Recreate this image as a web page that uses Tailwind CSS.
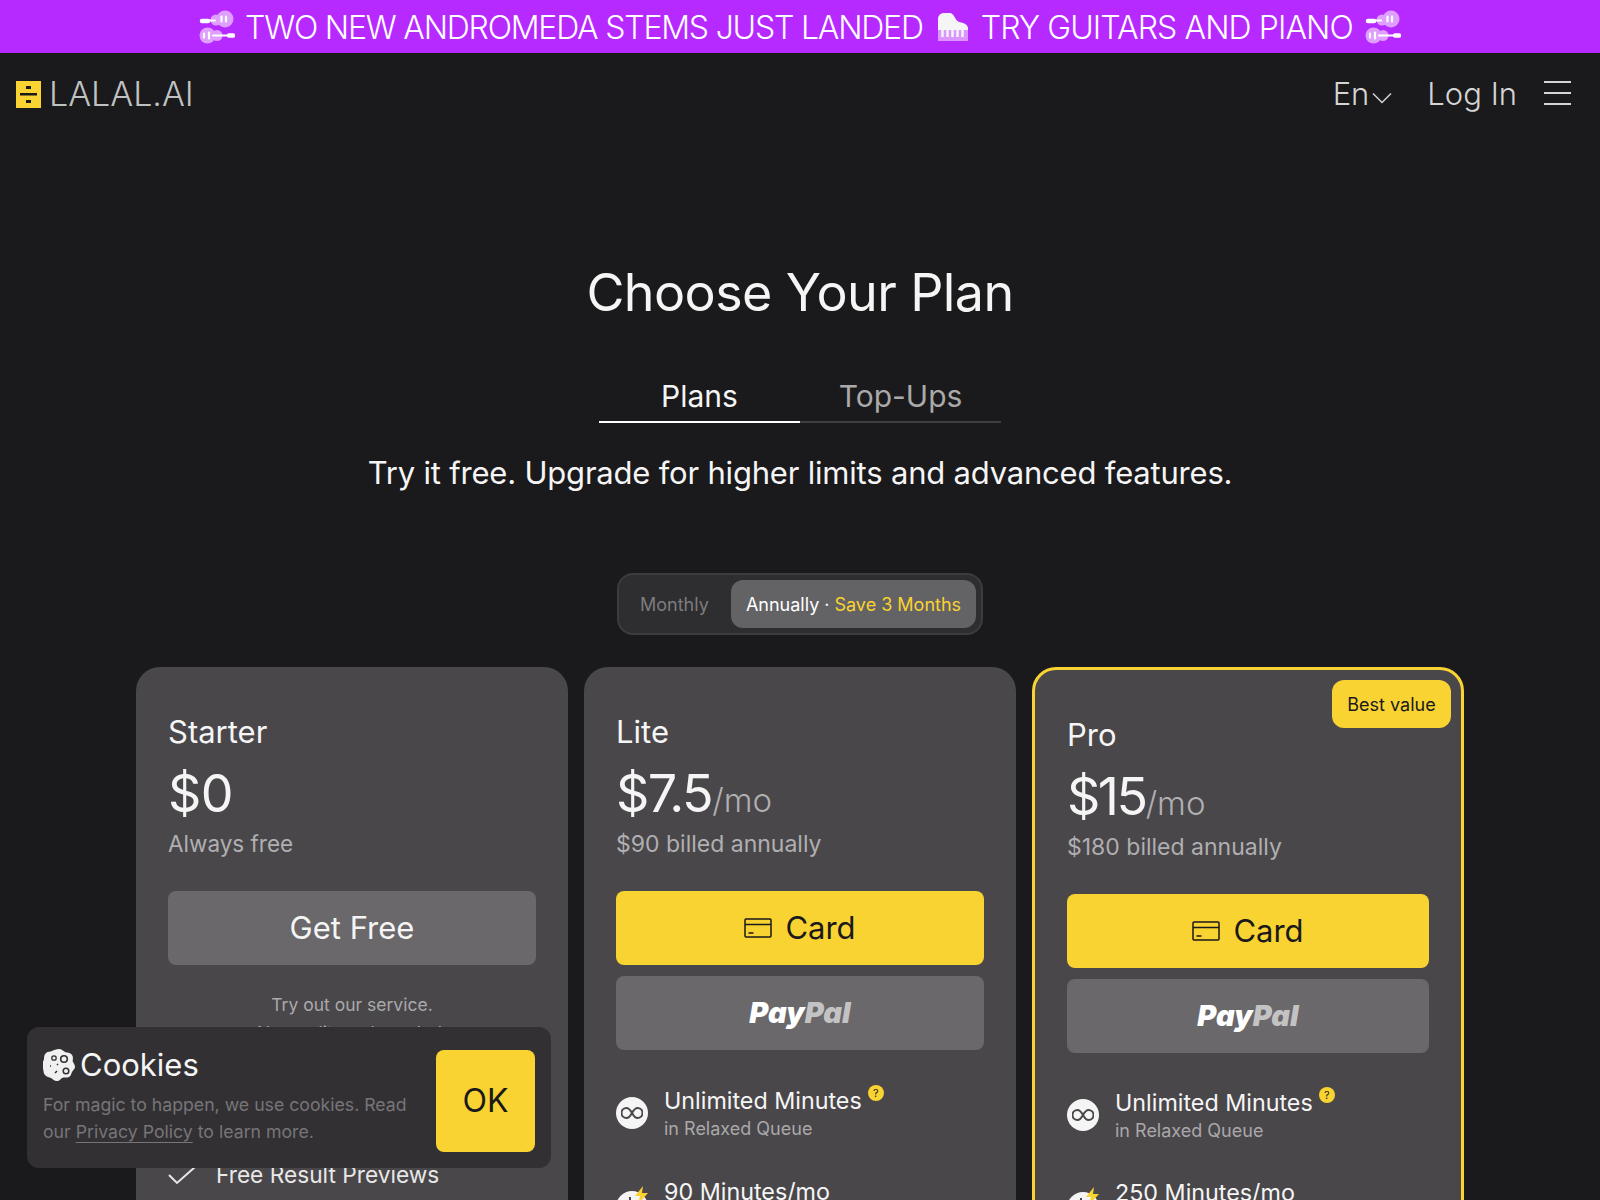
<!DOCTYPE html>
<html lang="en">
<head>
    <meta charset="UTF-8">
    <meta name="viewport" content="width=device-width, initial-scale=1.0">
    <title>LALAL.AI Pricing</title>
    <script src="https://cdn.jsdelivr.net/npm/@tailwindcss/browser@4"></script>
</head>
<body class="bg-[#1a191b] h-screen overflow-hidden font-['Inter',sans-serif] text-white">
    <!-- Promo banner -->
    <div class="h-[53px] bg-[#b62aff] flex items-center justify-center text-[32px] tracking-[-1.2px]">
        <svg class="w-[36px] h-[34px] mr-[10px]" viewBox="0 0 36 34">
            <g fill="#fff" opacity=".55"><circle cx="17" cy="10" r="5.500"/><circle cx="26" cy="9" r="8.500"/><circle cx="8.500" cy="25.500" r="8"/><circle cx="18" cy="25.500" r="5.500"/></g>
            <path d="M3 11h6" stroke="#fff" stroke-width="4.500" stroke-linecap="round"/>
            <path d="M8 10.500h8M22.500 6.500v5M27 6.500v5M14 25.500h16M5 23.500v4" stroke="#fff" stroke-width="2.200" stroke-linecap="round"/>
            <path d="M30 25.500h4" stroke="#fff" stroke-width="4.500" stroke-linecap="round"/>
            <path d="M10 22.500v6" stroke="#fff" stroke-width="2.200" stroke-linecap="round"/>
        </svg>
        <span class="font-light mt-[3px]">TWO NEW ANDROMEDA STEMS JUST LANDED</span>
        <svg class="w-[30px] h-[28px] ml-[15px] mr-[13px]" viewBox="0 0 30 28">
            <path d="M0 6a6 6 0 0 1 6-6h5c6 0 5 7 10 9 4 1 9 2 9 7v12H0z" fill="#fff" fill-opacity=".5"/>
            <path d="M0 6a6 6 0 0 1 6-6h5c6 0 5 7 10 9 4 1 9 2 9 7v1H0z" fill="#f5f5f5"/>
            <path d="M4.500 17v7M9.500 17v7M14.500 17v7M19.500 17v7M24.500 17v7" stroke="#f5f5f5" stroke-width="2.500"/>
        </svg>
        <span class="font-light mt-[3px] tracking-[-0.9px]">TRY GUITARS AND PIANO</span>
        <svg class="w-[36px] h-[34px] ml-[12px]" viewBox="0 0 36 34">
            <g fill="#fff" opacity=".55"><circle cx="17" cy="10" r="5.500"/><circle cx="26" cy="9" r="8.500"/><circle cx="8.500" cy="25.500" r="8"/><circle cx="18" cy="25.500" r="5.500"/></g>
            <path d="M3 11h6" stroke="#fff" stroke-width="4.500" stroke-linecap="round"/>
            <path d="M8 10.500h8M22.500 6.500v5M27 6.500v5M14 25.500h16M5 23.500v4" stroke="#fff" stroke-width="2.200" stroke-linecap="round"/>
            <path d="M30 25.500h4" stroke="#fff" stroke-width="4.500" stroke-linecap="round"/>
            <path d="M10 22.500v6" stroke="#fff" stroke-width="2.200" stroke-linecap="round"/>
        </svg>
    </div>

    <!-- Nav -->
    <div class="h-[82px] flex items-center justify-between pl-4 pr-[29px]">
        <div class="flex items-center gap-2">
            <svg class="w-[25px] h-[27px]" viewBox="0 0 25 27">
                <rect width="25" height="27" fill="#f9d331"/>
                <rect x="10" y="5" width="5" height="3" fill="#1a191b"/>
                <rect x="4" y="12" width="17" height="2.500" fill="#1a191b"/>
                <rect x="10" y="19" width="5" height="3" fill="#1a191b"/>
            </svg>
            <span class="text-[34px] font-light text-[#c0c2c2] -mt-[1px]">LALAL.AI</span>
        </div>
        <div class="flex items-center text-[31px] font-light text-[#d5d5d5]">
            <span>En</span>
            <svg class="w-[20px] h-[12px] ml-[3px] mt-[8px]" viewBox="0 0 20 12" fill="none" stroke="#d5d5d5" stroke-width="1.500"><path d="M1 1.500l9 9 9-9"/></svg>
            <span class="ml-[35px]">Log In</span>
            <div class="ml-[27px] -mt-[2px] w-[27px] flex flex-col gap-[9px]">
                <div class="h-[2px] bg-[#d5d5d5]"></div>
                <div class="h-[2px] bg-[#d5d5d5]"></div>
                <div class="h-[2px] bg-[#d5d5d5]"></div>
            </div>
        </div>
    </div>

    <!-- Header -->
    <h1 class="mt-[122px] text-center text-[52px] tracking-[-0.6px] leading-[72px] text-[#f5f5f5]">Choose Your Plan</h1>

    <div class="mt-[42px] flex justify-center">
        <div class="w-[201px] h-[52px] flex items-center justify-center text-[30px] text-[#f5f5f5] border-b-2 border-white">Plans</div>
        <div class="w-[201px] h-[52px] flex items-center justify-center text-[30px] text-[#a9a9aa] border-b-2 border-[#3f3e40]">Top-Ups</div>
    </div>

    <p class="mt-[30px] text-center text-[31px] tracking-[-0.2px] leading-[40px] text-[#f5f5f5]">Try it free. Upgrade for higher limits and advanced features.</p>

    <!-- Billing toggle -->
    <div class="mt-[80px] flex justify-center">
        <div class="w-[366px] h-[62px] bg-[#2e2d30] border-2 border-[#3c3b3e] rounded-2xl flex items-center pl-[21px] pr-[5px] justify-between text-[18px]">
            <span class="text-[#7d7c7e]">Monthly</span>
            <div class="w-[245px] h-[48px] bg-[#636265] rounded-xl flex items-center justify-center">
                <span class="text-white">Annually</span><span class="text-white mx-[5px]">&middot;</span><span class="text-[#f9d331]">Save 3 Months</span>
            </div>
        </div>
    </div>

    <!-- Plans -->
    <div class="mt-[32px] flex justify-center gap-4">
        <div class="relative w-[432px] h-[700px] bg-[#49474a] rounded-3xl px-8 pt-[45px]">
            <div class="text-[31px] leading-[40px] text-[#f5f5f5]">Starter</div>
            <div class="mt-[12px] h-[60px] text-[52px] leading-[60px] tracking-[-0.5px] text-[#f5f5f5]">$0</div>
            <div class="mt-[4px] text-[22.5px] leading-[32px] text-[#b0afb1]">Always free</div>
            <button class="mt-[31px] w-full h-[74px] bg-[#6a686b] rounded-lg text-[31px] text-[#f5f5f5]">Get Free</button>
            <p class="mt-[26px] text-center text-[17.5px] leading-[28px] text-[#aaa9ab]">Try out our service.<br>No credit card needed.</p>
            <div class="mt-[111px] flex items-center gap-5 text-[22.7px] text-[#e8e8e8]">
                <svg class="w-[28px] h-[20px]" viewBox="0 0 28 20" fill="none" stroke="#e8e8e8" stroke-width="2"><path d="M1 10l8 8L27 2"/></svg>
                <span>Free Result Previews</span>
            </div>
        </div>

        <div class="relative w-[432px] h-[700px] bg-[#49474a] rounded-3xl px-8 pt-[45px]">
            <div class="text-[31px] leading-[40px] text-[#f5f5f5]">Lite</div>
            <div class="mt-[12px] h-[60px] leading-[60px] flex items-baseline">
                <span class="text-[52px] tracking-[-1.5px] text-[#f5f5f5]">$7.5</span><span class="text-[33px] font-light text-[#b0afb1]">/mo</span>
            </div>
            <div class="mt-[4px] text-[23px] leading-[32px] text-[#b0afb1]">$90 billed annually</div>
            <button class="mt-[31px] w-full h-[74px] bg-[#f9d331] rounded-lg flex items-center justify-center gap-[13px] text-[31px] text-[#1a191b]">
                <svg class="w-[28px] h-[20px]" viewBox="0 0 28 20" fill="none" stroke="#1a191b" stroke-width="1.500"><rect x="1" y="1" width="26" height="18" rx="1"/><path d="M1 6.500h26M4.500 15h5"/></svg>
                Card
            </button>
            <button class="mt-[11px] w-full h-[74px] bg-[#6a686b] rounded-lg flex items-center justify-center text-[29px] font-black italic">
                <span class="text-white">Pay</span><span class="text-[#c3c3c4]">Pal</span>
            </button>
            <div class="mt-[35px] flex gap-4 items-center">
                <div class="w-8 h-8 rounded-full bg-[#f5f5f5] flex items-center justify-center shrink-0">
                    <svg class="w-[22px] h-[12px]" viewBox="0 0 22 12" fill="none" stroke="#49474a" stroke-width="2"><path d="M11 6C9 2.500 7.500 1 5.500 1a5 5 0 0 0 0 10c2 0 3.500-1.500 5.500-5s3.500-5 5.500-5a5 5 0 0 1 0 10c-2 0-3.500-1.500-5.500-5z"/></svg>
                </div>
                <div>
                    <div class="flex items-start text-[23.3px] leading-[32px] text-[#f5f5f5]">Unlimited Minutes
                        <span class="ml-[6px] w-4 h-4 rounded-full bg-[#f9d331] text-[#1a191b] text-[11px] leading-[16px] text-center">?</span>
                    </div>
                    <div class="text-[18px] leading-[24px] text-[#a9a8aa]">in Relaxed Queue</div>
                </div>
            </div>
            <div class="mt-[35px] flex gap-4">
                <div class="relative w-8 h-8 shrink-0 mt-[15px]">
                    <svg class="w-8 h-8" viewBox="0 0 32 32"><circle cx="16" cy="16" r="16" fill="#f5f5f5"/><path d="M14 6v10" stroke="#49474a" stroke-width="2"/></svg>
                    <svg class="absolute -top-[6px] left-[18px] w-[16px] h-[20px]" viewBox="0 0 16 18"><path d="M9 0L1 10h5l-2 8 10-11H8z" fill="#f9d331"/></svg>
                </div>
                <div class="text-[23.3px] leading-[32px] text-[#f5f5f5]">90 Minutes/mo</div>
            </div>
        </div>

        <div class="relative w-[432px] h-[700px] bg-[#49474a] rounded-3xl border-[3px] border-[#f9d331] px-8 pt-[45px]">
            <div class="absolute top-[10px] right-[10px] w-[119px] h-[48px] bg-[#f9d331] rounded-xl flex items-center justify-center text-[18px] text-[#1a191b]">Best value</div>
            <div class="text-[31px] leading-[40px] text-[#f5f5f5]">Pro</div>
            <div class="mt-[12px] h-[60px] leading-[60px] flex items-baseline">
                <span class="text-[52px] tracking-[-2.5px] text-[#f5f5f5]">$15</span><span class="text-[33px] font-light text-[#b0afb1]">/mo</span>
            </div>
            <div class="mt-[4px] text-[23px] leading-[32px] text-[#b0afb1]">$180 billed annually</div>
            <button class="mt-[31px] w-full h-[74px] bg-[#f9d331] rounded-lg flex items-center justify-center gap-[13px] text-[31px] text-[#1a191b]">
                <svg class="w-[28px] h-[20px]" viewBox="0 0 28 20" fill="none" stroke="#1a191b" stroke-width="1.500"><rect x="1" y="1" width="26" height="18" rx="1"/><path d="M1 6.500h26M4.500 15h5"/></svg>
                Card
            </button>
            <button class="mt-[11px] w-full h-[74px] bg-[#6a686b] rounded-lg flex items-center justify-center text-[29px] font-black italic">
                <span class="text-white">Pay</span><span class="text-[#c3c3c4]">Pal</span>
            </button>
            <div class="mt-[34px] flex gap-4 items-center">
                <div class="w-8 h-8 rounded-full bg-[#f5f5f5] flex items-center justify-center shrink-0">
                    <svg class="w-[22px] h-[12px]" viewBox="0 0 22 12" fill="none" stroke="#49474a" stroke-width="2"><path d="M11 6C9 2.500 7.500 1 5.500 1a5 5 0 0 0 0 10c2 0 3.500-1.500 5.500-5s3.500-5 5.500-5a5 5 0 0 1 0 10c-2 0-3.500-1.500-5.500-5z"/></svg>
                </div>
                <div>
                    <div class="flex items-start text-[23.3px] leading-[32px] text-[#f5f5f5]">Unlimited Minutes
                        <span class="ml-[6px] w-4 h-4 rounded-full bg-[#f9d331] text-[#1a191b] text-[11px] leading-[16px] text-center">?</span>
                    </div>
                    <div class="text-[18px] leading-[24px] text-[#a9a8aa]">in Relaxed Queue</div>
                </div>
            </div>
            <div class="mt-[34px] flex gap-4">
                <div class="relative w-8 h-8 shrink-0 mt-[15px]">
                    <svg class="w-8 h-8" viewBox="0 0 32 32"><circle cx="16" cy="16" r="16" fill="#f5f5f5"/><path d="M14 6v10" stroke="#49474a" stroke-width="2"/></svg>
                    <svg class="absolute -top-[6px] left-[18px] w-[16px] h-[20px]" viewBox="0 0 16 18"><path d="M9 0L1 10h5l-2 8 10-11H8z" fill="#f9d331"/></svg>
                </div>
                <div class="text-[23.3px] leading-[32px] text-[#f5f5f5]">250 Minutes/mo</div>
            </div>
        </div>
    </div>

    <!-- Cookie notice -->
    <div class="fixed left-[27px] bottom-[32px] w-[524px] h-[141px] bg-[#323033] rounded-xl pl-[16px] pr-[16px] flex items-center justify-between">
        <div class="mb-[6px]">
            <div class="flex items-center gap-[5px] text-[31px] leading-[40px] text-[#f5f5f5]">
                <svg class="w-[32px] h-[32px]" viewBox="0 0 32 32">
                    <path d="M16 0c3 0 4 2 6 3s5 0 7 3 0 5 1 7 2 3 2 5-2 3-3 5-1 4-3 5-5 0-7 1-2 3-5 3-4-2-6-3-4-1-6-3-1-4-2-6-1-3-1-5 2-3 2-5 0-4 2-6 4-1 6-2 4-2 7-2z" fill="#f0f0f0"/>
                    <circle cx="11" cy="9" r="2.200" fill="none" stroke="#323033" stroke-width="1.300"/>
                    <circle cx="21" cy="10" r="3.300" fill="none" stroke="#323033" stroke-width="1.600"/>
                    <circle cx="23" cy="22" r="2.800" fill="none" stroke="#323033" stroke-width="1.500"/>
                    <path d="M7 17h1M14 15l1 1M12 24l2-2" stroke="#323033" stroke-width="1.500"/>
                </svg>
                Cookies
            </div>
            <p class="mt-[6px] w-[380px] text-[17.7px] leading-[27px] text-[#777578]">For magic to happen, we use cookies. Read our <span class="underline underline-offset-4">Privacy Policy</span> to learn more.</p>
        </div>
        <button class="mt-[7px] w-[99px] h-[102px] bg-[#f9d331] rounded-lg text-[32px] text-[#1a191b]">OK</button>
    </div>
</body>
</html>
